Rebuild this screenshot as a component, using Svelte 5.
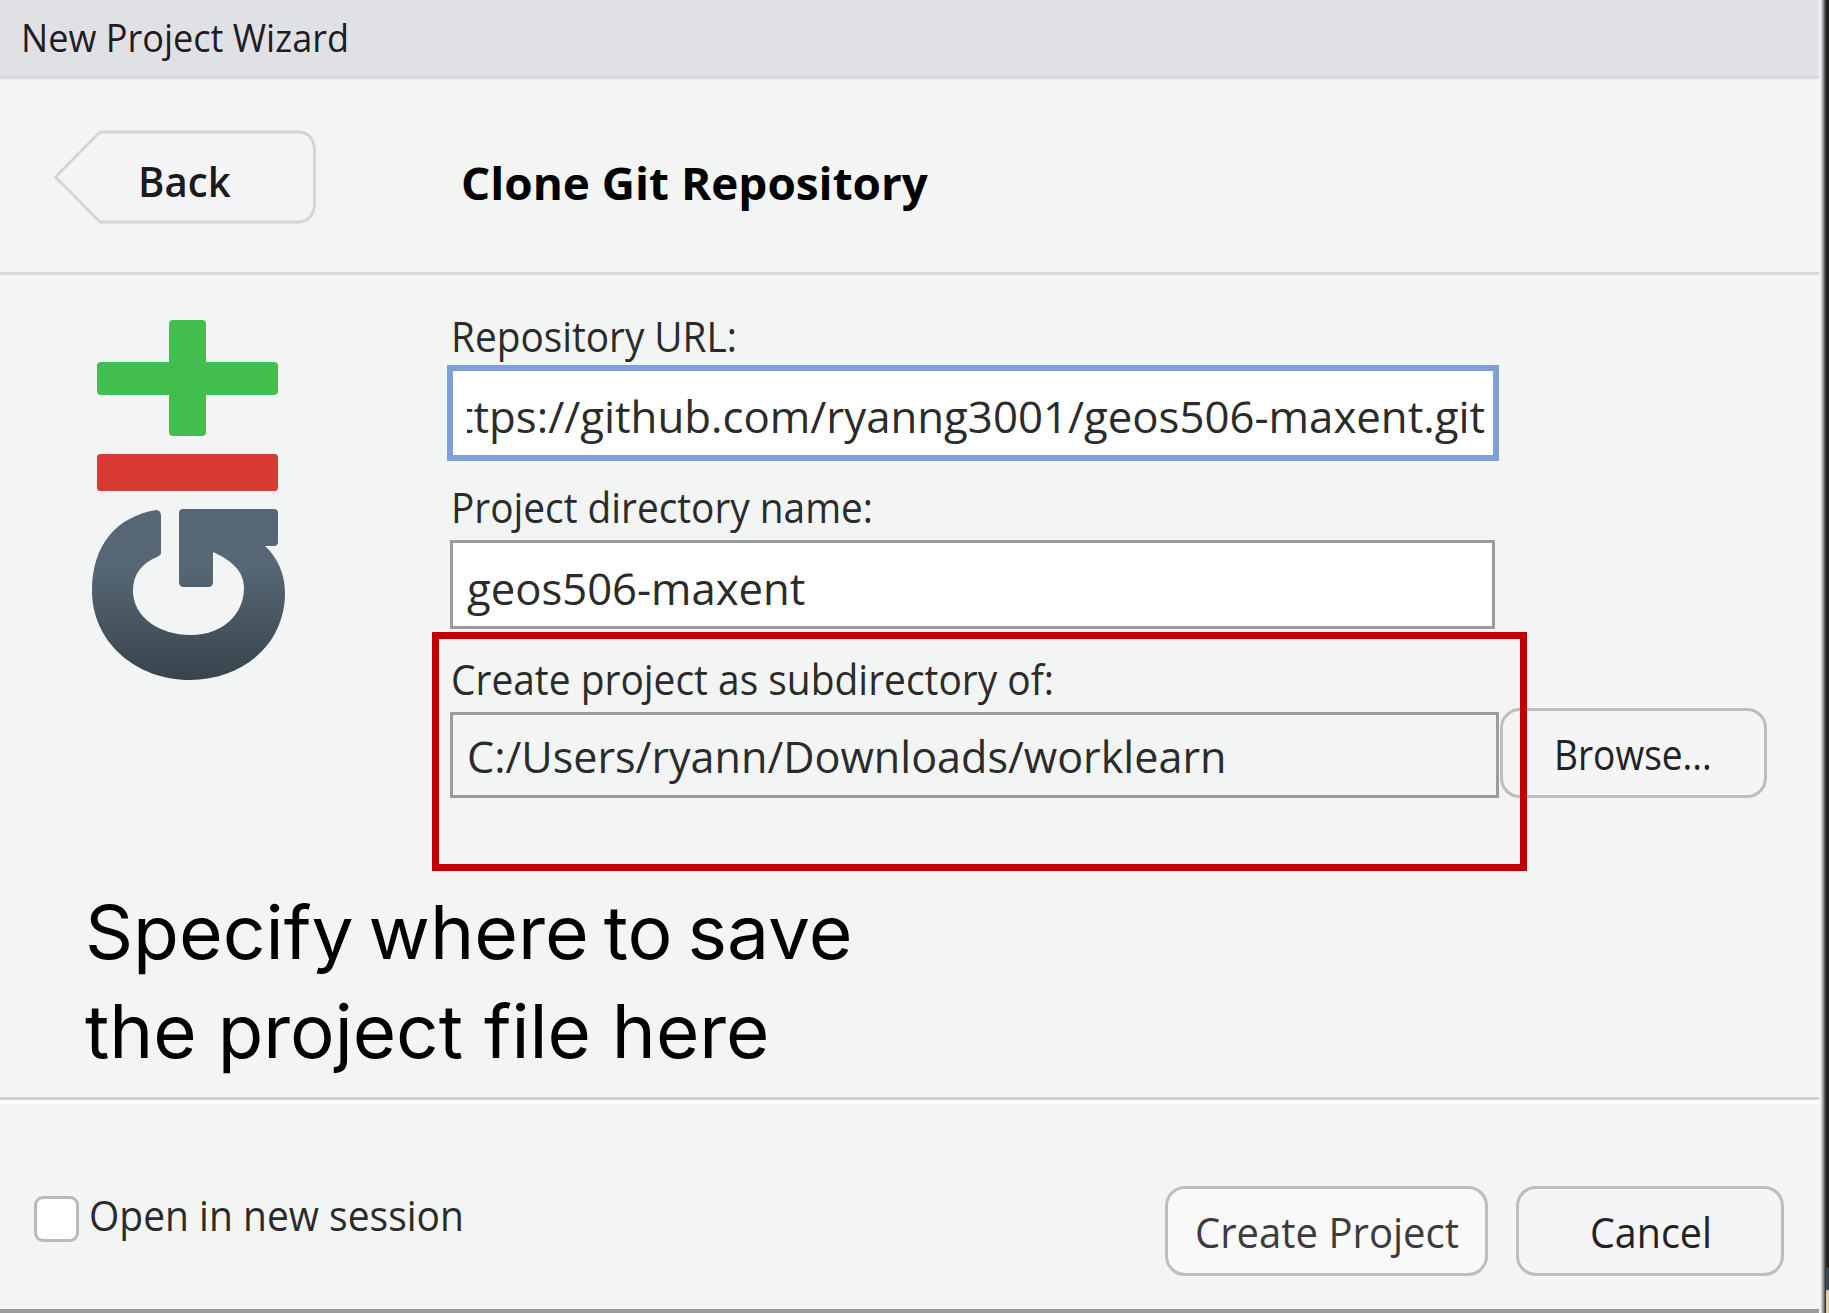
<script>
  // Condenses or widens a line of text to a given advance width.
  function fit(node, width) {
    const natural = node.offsetWidth;
    node.style.setProperty('--stretch', String(width / natural));
  }

  const url = 'https://github.com/ryanng3001/geos506-maxent.git';
  let inNewSession = $state(false);
</script>

<div class="screen">
  <main class="dialog">
    <header class="titlebar"><span class="text" use:fit={328}>New Project Wizard</span></header>

    <section class="heading">
      <div class="back" role="button" tabindex="0">
        <svg width="262" height="94" viewBox="0 0 262 94">
          <path d="M46 2H245Q259 3 260.5 19V75Q259 91 245 92H46L1.5 47Z" fill="#f4f4f7" stroke="#d3d6d6" stroke-width="2.8" stroke-linejoin="round" />
        </svg>
        <span class="text" use:fit={93}>Back</span>
      </div>
      <h1><span class="text" use:fit={467}>Clone Git Repository</span></h1>
    </section>

    <section class="content">
      <svg class="logo" width="204" height="372" viewBox="0 0 204 372">
        <defs>
          <linearGradient id="steel" x1="0" y1="0" x2="0" y2="1">
            <stop offset="0" stop-color="#566674" />
            <stop offset=".36" stop-color="#566674" />
            <stop offset=".8" stop-color="#414e57" />
            <stop offset="1" stop-color="#39444c" />
          </linearGradient>
        </defs>
        <path d="M73 0h29q4 0 4 4v38h68q4 0 4 4v25q0 4-4 4h-68v37q0 4-4 4H73q-4 0-4-4V75H1q-4 0-4-4V46q0-4 4-4h68V4q0-4 4-4Z" fill="#41be4d" />
        <rect x="-3" y="134" width="181" height="37" rx="3.5" fill="#d83b33" />
        <path d="M56 190Q61 190 61 196V233Q61 235 57 237C42 243 33 254 33 271C33 296 58 315 91 315C123 315 144 294 144 268C144 252 133 241 113 232V262Q113 267 108 267H84Q79 267 79 262V193Q79 189 83 189H174Q178 189 178 193V222Q178 226 174 226H165C177 237 185 253 185 273C185 324 143 360 90 360C35 360-8 321-8 271C-8 225 16 197 56 190Z" fill="url(#steel)" />
      </svg>

      <div class="form">
        <div class="label"><span class="text" use:fit={286}>Repository URL:</span></div>
        <div class="field focused"><div class="clip"><span class="text" use:fit={1054}>{url}</span></div></div>
        <div class="label second"><span class="text" use:fit={422}>Project directory name:</span></div>
        <div class="field name"><span class="text" use:fit={338}>geos506-maxent</span></div>
        <div class="label third"><span class="text" use:fit={603}>Create project as subdirectory of:</span></div>
        <div class="row">
          <div class="field readonly"><span class="text" use:fit={759}>C:/Users/ryann/Downloads/worklearn</span></div>
          <button class="browse"><span class="text" use:fit={158}>Browse...</span></button>
        </div>
      </div>
    </section>

    <footer>
      <label class="session">
        <input type="checkbox" bind:checked={inNewSession} />
        <span class="text" use:fit={375}>Open in new session</span>
      </label>
      <div class="actions">
        <button class="create"><span class="text" use:fit={264}>Create Project</span></button>
        <button class="cancel"><span class="text" use:fit={122}>Cancel</span></button>
      </div>
    </footer>
  </main>
  <div class="edge"></div>

  <div class="callout"></div>
  <div class="note">
    <div class="tight"><span class="text" use:fit={767}>Specify where to save</span></div>
    <div><span class="text" use:fit={684}>the project file here</span></div>
  </div>
</div>

<style>
  :global(body) { margin: 0; overflow: hidden; }
  .screen {
    position: relative;
    display: flex;
    width: 1829px;
    height: 1313px;
    overflow: hidden;
    background: #f3f5f4;
    font-family: "Open Sans", "Noto Sans", sans-serif;
    font-size: 42px;
    color: #2b2b2b;
  }
  .text {
    display: inline-block;
    white-space: nowrap;
    transform: scaleX(var(--stretch, 1));
    transform-origin: 0 50%;
  }
  .dialog {
    display: flex;
    flex-direction: column;
    box-sizing: border-box;
    width: 1819px;
    height: 1313px;
    border-bottom: 4px solid #999b9b;
  }
  .edge {
    width: 10px;
    background:
      linear-gradient(#0000 1267px, #34485b 1268px, #34485b 1289px, #e9c9a0 1291px) 7px 0 / 3px 100% no-repeat,
      linear-gradient(90deg, #f6f8f7 0 1px, #c4c6c6 3px, #777 5px, #222320 7px, #1c1d1a);
  }
  .titlebar {
    box-sizing: border-box;
    height: 79px;
    padding-left: 21px;
    border-bottom: 3px solid #d7dadb;
    background: #e0e1e5;
    font-size: 38.5px;
    line-height: 75px;
    color: #1d1d22;
  }
  .heading {
    display: flex;
    box-sizing: border-box;
    height: 196px;
    padding-left: 54px;
    border-bottom: 3px solid #d6d9da;
  }
  .back { display: grid; width: 262px; height: 94px; margin-top: 51px; }
  .back svg, .back .text { grid-area: 1 / 1; }
  .back .text {
    justify-self: start;
    margin-left: 84px;
    line-height: 102px;
    font-size: 41px;
    font-weight: 600;
    color: #1b1b1b;
  }
  h1 {
    margin: 0 0 0 145px;
    font-size: 45.5px;
    font-weight: 700;
    line-height: 207px;
    color: #000;
  }
  .content { display: flex; height: 822px; }
  .logo { flex: none; margin: 45px 0 0 100px; overflow: visible; }
  .form { margin: 30px 0 0 143px; width: 1320px; }
  .label { height: 60px; padding-left: 3.5px; line-height: 61px; }
  .label.second { margin-top: 15px; line-height: 62px; }
  .label.third { margin-top: 19px; line-height: 62px; }
  .field { box-sizing: border-box; font-size: 43.5px; overflow: hidden; border: 3px solid #9b9d9d; }
  .focused {
    width: 1052px;
    height: 96px;
    padding-left: 14px;
    border: 6px solid #7f9fdb;
    background: #fff;
    line-height: 92px;
  }
  .clip { display: flex; justify-content: flex-end; width: 1018px; height: 84px; overflow: hidden; }
  .clip .text { flex: none; transform-origin: 100% 50%; }
  .name { width: 1045px; height: 89px; margin: 4px 0 0 3px; padding-left: 14px; background: #fff; line-height: 91px; }
  .row { display: flex; gap: 1px; padding-left: 3px; }
  .readonly { width: 1049px; height: 86px; margin-top: 4px; padding-left: 14px; line-height: 84px; }
  button {
    box-sizing: border-box;
    height: 90px;
    padding: 0;
    border: 3px solid #bcbdbe;
    border-radius: 20px;
    background: #f5f5f8;
    font: inherit;
    line-height: 86px;
    text-align: left;
    color: #222;
  }
  .browse { width: 267px; padding-left: 51px; }
  footer {
    display: flex;
    justify-content: space-between;
    box-sizing: border-box;
    flex: 1;
    border-top: 3px solid #d0d2d2;
    padding: 86px 35px 0 34px;
    box-shadow: inset 0 4px #fff;
  }
  .session { display: flex; align-items: flex-start; width: 440px; margin-top: 10px; }
  .session input {
    appearance: none;
    box-sizing: border-box;
    flex: none;
    width: 45px;
    height: 46px;
    margin: 0;
    border: 3px solid #b9bbbb;
    border-radius: 9px;
    background: #fff;
  }
  .session .text { margin-left: 10px; line-height: 38px; }
  .actions { display: flex; gap: 28px; }
  .create { width: 323px; padding-left: 27px; background: #f9f9f9; color: #3c3c3c; }
  .cancel { width: 268px; padding-left: 71px; }
  .callout {
    position: absolute;
    left: 432px;
    top: 632px;
    box-sizing: border-box;
    width: 1095px;
    height: 239px;
    border: 7px solid #c00000;
  }
  .note {
    position: absolute;
    left: 85px;
    top: 883px;
    font-family: Inter, sans-serif;
    font-size: 74px;
    line-height: 99px;
    color: #000;
  }
  .tight { word-spacing: -6px; }
</style>
